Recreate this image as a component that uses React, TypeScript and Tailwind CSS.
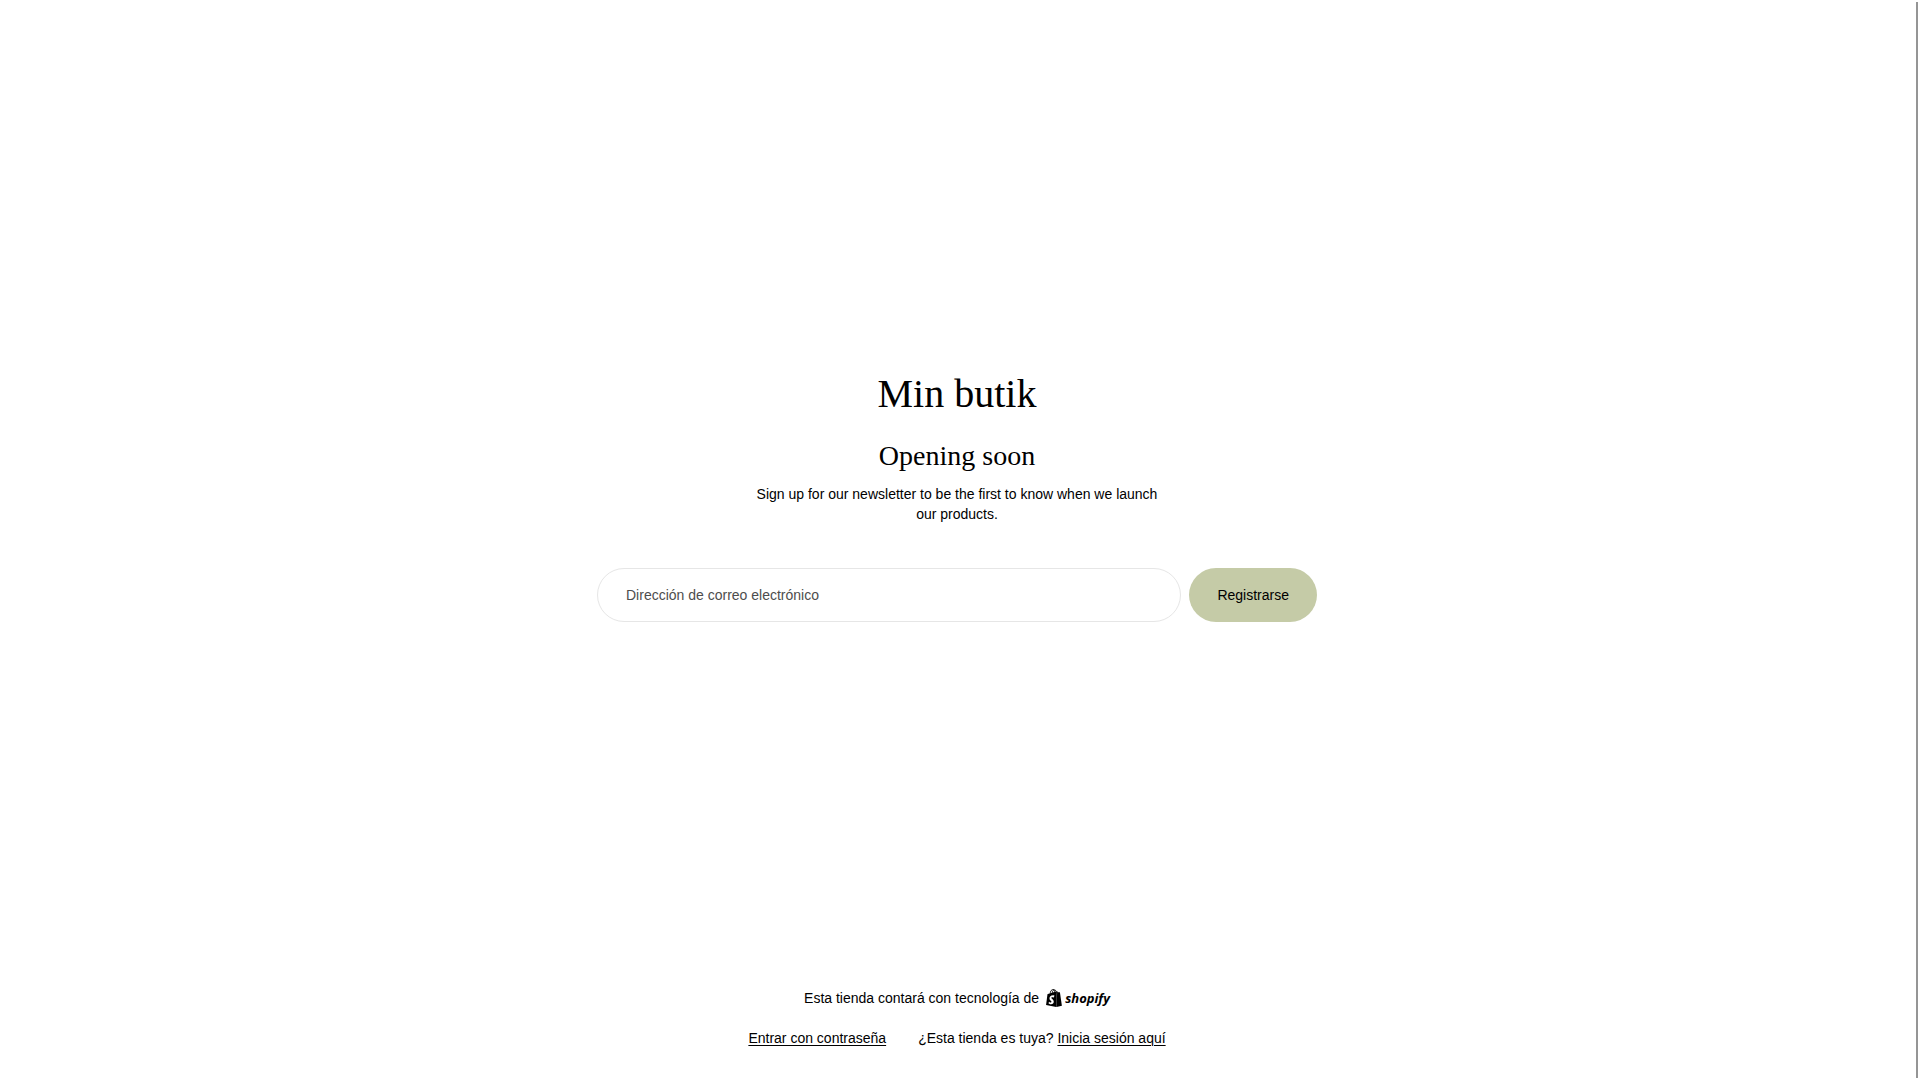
import { useState } from "react";
import { SiShopify } from "react-icons/si";

const App: React.FC = () => {
  const [email, setEmail] = useState("");

  const handleSubmit = (e: React.FormEvent<HTMLFormElement>) => {
    e.preventDefault();
    setEmail("");
  };

  return (
    <div className="flex min-h-screen bg-white font-['Liberation_Sans',sans-serif] text-sm leading-5 text-black">
      <div className="flex flex-1 flex-col">
        <main className="flex flex-1 flex-col items-center justify-center px-4">
          <h1 className="font-['Liberation_Serif',serif] text-[40px] leading-14">Min butik</h1>
          <h2 className="mt-3 font-['Liberation_Serif',serif] text-[28px] leading-11">Opening soon</h2>
          <p className="mt-1.5 max-w-[420px] text-center">
            Sign up for our newsletter to be the first to know when we launch our products.
          </p>
          <form onSubmit={handleSubmit} className="mt-11 flex w-full max-w-[720px] gap-2">
            <input
              type="email"
              name="email"
              required
              aria-label="Dirección de correo electrónico"
              placeholder="Dirección de correo electrónico"
              value={email}
              onChange={(e) => setEmail(e.target.value)}
              className="min-w-0 flex-1 rounded-full border border-[#e6e6e6] px-7 py-4 placeholder:text-[#4d4d4d]"
            />
            <button type="submit" className="rounded-full bg-[#c5cba7] px-7 py-4">
              Registrarse
            </button>
          </form>
        </main>

        <footer className="flex flex-col items-center gap-5 pb-8">
          <div className="flex h-5 items-center gap-1.5">
            <span>Esta tienda contará con tecnología de</span>
            <a href="#shopify" className="flex items-center gap-0.5">
              <SiShopify className="size-[18px]" aria-hidden="true" />
              <span className="font-['Open_Sans',sans-serif] text-[13px] leading-5 font-bold italic">shopify</span>
            </a>
          </div>
          <div className="flex gap-8">
            <a href="#password" className="underline decoration-1 underline-offset-2">
              Entrar con contraseña
            </a>
            <span>
              ¿Esta tienda es tuya?{" "}
              <a href="#login" className="underline decoration-1 underline-offset-2">
                Inicia sesión aquí
              </a>
            </span>
          </div>
        </footer>
      </div>

      {/* scroll track */}
      <div className="flex w-[6px] p-[2px]">
        <div className="flex-1 bg-[#959595]" />
      </div>
    </div>
  );
};

export default App;
